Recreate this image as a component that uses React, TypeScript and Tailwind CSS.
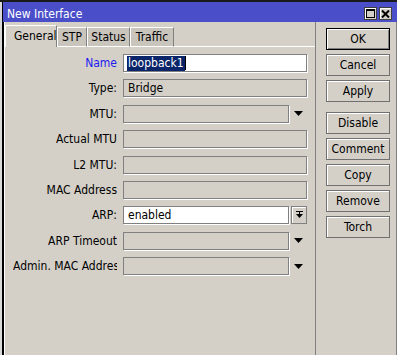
import React from "react";

// ── Small drawings ────────────────────────────────────────────────────────
function DownArrow() {
  return (
    <svg width="9" height="5" viewBox="0 0 9 5" className="block">
      <polygon points="0,0 9,0 4.5,5" fill="#000" />
    </svg>
  );
}

function BarArrow() {
  return (
    <svg width="7" height="8" viewBox="0 0 7 8" className="block">
      <rect x="0" y="0" width="7" height="1" fill="#000" />
      <rect x="3" y="1" width="1" height="3" fill="#000" />
      <polygon points="0,3 7,3 3.5,7" fill="#000" />
    </svg>
  );
}

function TitleButton({ kind }: { kind: "max" | "close" }) {
  return (
    <div className="w-[13px] h-[13px] bg-[#d4d0c8] border border-[#404040] shadow-[inset_1px_1px_0_#fff] flex items-center justify-center">
      {kind === "max" ? (
        <div className="w-[9px] h-[9px] border border-black border-t-2" />
      ) : (
        <svg width="9" height="8" viewBox="0 0 9 8" className="block">
          <path d="M1 0.5 L8 7.5 M8 0.5 L1 7.5" stroke="#000" strokeWidth="2" />
        </svg>
      )}
    </div>
  );
}

// ── Buttons on the right ──────────────────────────────────────────────────
function SideButton({ label, primary }: { label: string; primary?: boolean }) {
  return (
    <button
      className={`w-[64px] h-[22px] bg-[#d4d0c8] text-[12px] text-black leading-none ${
        primary
          ? "border border-black shadow-[inset_1px_1px_0_#fff,inset_-1px_-1px_0_#808080]"
          : "border border-[#707070] shadow-[inset_1px_1px_0_#fff]"
      }`}
    >
      {label}
    </button>
  );
}

// ── Form rows ─────────────────────────────────────────────────────────────
type FieldKind = "plain" | "drop" | "arp";

function Row({
  label,
  value,
  white,
  kind = "plain",
  blue,
  selected,
}: {
  label: string;
  value?: string;
  white?: boolean;
  kind?: FieldKind;
  blue?: boolean;
  selected?: boolean;
}) {
  const fieldW = kind === "plain" ? "w-[184px]" : "w-[166px]";
  return (
    <div className="flex items-center h-[18px]">
      <div
        className={`ml-[9px] w-[104px] shrink-0 overflow-hidden whitespace-nowrap text-right ${
          blue ? "text-[#2020f0]" : "text-black"
        }`}
      >
        {label}
      </div>
      <div
        className={`ml-[6px] h-[18px] ${fieldW} shrink-0 border border-[#808080] shadow-[1px_1px_0_#fff] flex items-center pl-[2px] overflow-hidden ${
          white ? "bg-white" : "bg-[#d4d0c8]"
        }`}
      >
        {selected ? (
          <>
            <span className="ml-[1px] bg-[#0a246a] text-white h-[15px] leading-[15px] px-[1px]">
              {value}
            </span>
            <span className="w-[1px] h-[14px] bg-black" />
          </>
        ) : (
          <span className="pl-[2px]">{value}</span>
        )}
      </div>
      {kind === "drop" && (
        <div className="w-[18px] flex justify-center pl-[1px]">
          <DownArrow />
        </div>
      )}
      {kind === "arp" && (
        <div className="ml-[2px] w-[16px] h-[18px] border border-[#808080] shadow-[inset_1px_1px_0_#fff] flex items-center justify-center">
          <BarArrow />
        </div>
      )}
    </div>
  );
}

// ── Tabs ──────────────────────────────────────────────────────────────────
function Tab({ label, width, active }: { label: string; width: string; active?: boolean }) {
  return (
    <div
      className={`${width} flex items-center border-t border-l border-t-white border-l-white border-r border-r-[#808080] ${
        active
          ? "h-[22px] bg-[#d4d0c8] pl-[8px] pb-[2px]"
          : "h-[20px] bg-[#c9c5bd] justify-center border-b border-b-white"
      }`}
    >
      {label}
    </div>
  );
}

// ── Window ────────────────────────────────────────────────────────────────
export default function App() {
  return (
    <div className="w-[397px] h-[355px] bg-[#d4d0c8] flex flex-col overflow-hidden font-['DejaVu_Sans_Condensed','DejaVu_Sans',sans-serif] font-stretch-condensed text-[12px] text-black">
      <div className="h-[2px] shrink-0 bg-[#1a1a1a]" />
      <div className="flex flex-1 min-h-0">
        <div className="w-[2px] bg-[#d8d8d8]" />
        <div className="w-[1px] bg-black" />
        <div className="flex-1 flex flex-col min-w-0">
          {/* Title bar */}
          <div className="h-[20px] shrink-0 bg-[#4a4fc9] flex items-center pt-[3px] pl-[4px] pr-[5px]">
            <span className="text-white flex-1">New Interface</span>
            <div className="flex gap-[2px]">
              <TitleButton kind="max" />
              <TitleButton kind="close" />
            </div>
          </div>

          {/* Body */}
          <div className="flex-1 flex border-l border-black shadow-[inset_1px_0_0_#fff] border-r border-r-[#808080]">
            {/* Tabs + form */}
            <div className="w-[311px] shrink-0 flex flex-col">
              <div className="flex items-end h-[25px] shrink-0 pl-[1px]">
                <Tab label="General" width="w-[52px]" active />
                <Tab label="STP" width="w-[30px]" />
                <Tab label="Status" width="w-[43px]" />
                <Tab label="Traffic" width="w-[44px]" />
                <div className="flex-1 h-[1px] bg-white" />
              </div>

              <div className="flex flex-col gap-[7.4px] pt-[7px]">
                <Row label="Name" value="loopback1" white blue selected />
                <Row label="Type:" value="Bridge" />
                <Row label="MTU:" kind="drop" />
                <Row label="Actual MTU" />
                <Row label="L2 MTU:" />
                <Row label="MAC Address" />
                <Row label="ARP:" value="enabled" white kind="arp" />
                <Row label="ARP Timeout" kind="drop" />
                <Row label="Admin. MAC Address:" kind="drop" />
              </div>
            </div>

            <div className="w-[1px] bg-[#808080]" />

            {/* Actions */}
            <div className="flex flex-col pl-[10px] pt-[6px]">
              <div className="flex flex-col gap-[4px]">
                <SideButton label="OK" primary />
                <SideButton label="Cancel" />
                <SideButton label="Apply" />
              </div>
              <div className="flex flex-col gap-[4px] mt-[10px]">
                <SideButton label="Disable" />
                <SideButton label="Comment" />
                <SideButton label="Copy" />
                <SideButton label="Remove" />
                <SideButton label="Torch" />
              </div>
            </div>
          </div>
        </div>
      </div>
    </div>
  );
}
